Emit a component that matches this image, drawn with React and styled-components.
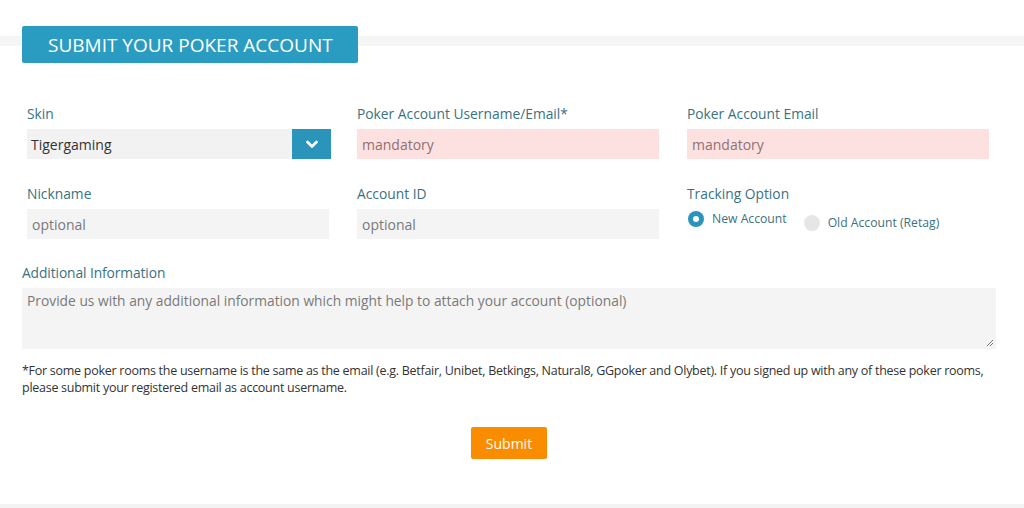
import React from "react";
import styled, { createGlobalStyle } from "styled-components";

const Global = createGlobalStyle`
  html, body { margin: 0; padding: 0; background: #fff; }
  body { font-family: "Open Sans", "Liberation Sans", sans-serif; }
  * { box-sizing: border-box; }
`;

const Page = styled.div`
  width: 1024px;
  height: 508px;
  padding: 26px 28px 0 22px;
  background:
    linear-gradient(to bottom, transparent 36px, #f5f5f5 36px, #f5f5f5 46px, transparent 46px),
    linear-gradient(to top, #f3f3f3 4px, transparent 4px);
  display: flex;
  flex-direction: column;
`;

const TitleTab = styled.div`
  align-self: flex-start;
  width: 336px;
  height: 37px;
  background: #2b9cc1;
  color: #fff;
  font-size: 19px;
  line-height: 38px;
  padding-left: 26px;
  border-radius: 2px;
`;

const Grid = styled.div`
  margin-top: 41px;
  padding-left: 5px;
  display: grid;
  grid-template-columns: repeat(3, 302px);
  column-gap: 28px;
  row-gap: 25px;
`;

const Field = styled.div`
  display: flex;
  flex-direction: column;
`;

const Label = styled.div`
  color: #3a7281;
  font-size: 13.8px;
  line-height: 20px;
  height: 20px;
  margin-bottom: 5px;
  letter-spacing: ${(p) => (p.$tight ? "-0.1px" : "0")};
`;

const Input = styled.div`
  height: 30px;
  background: ${(p) => (p.$mandatory ? "#fde1e1" : "#f4f4f4")};
  color: ${(p) => (p.$mandatory ? "#8d7272" : "#7a7a7a")};
  font-size: 14px;
  line-height: 31px;
  padding-left: 5px;
`;

const SelectBox = styled.div`
  height: 30px;
  width: 304px;
  background: #f2f2f2;
  display: flex;
  align-items: stretch;
`;

const SelectValue = styled.div`
  flex: 1;
  color: #333;
  font-size: 14px;
  line-height: 31px;
  padding-left: 4px;
`;

const SelectButton = styled.div`
  width: 39px;
  background: #2b94bb;
  display: flex;
  align-items: center;
  justify-content: center;
`;

const RadioRow = styled.div`
  display: flex;
  align-items: flex-start;
  gap: 16px;
  padding-top: 1px;
`;

const RadioOption = styled.div`
  display: flex;
  align-items: center;
  gap: 8px;
  margin-top: ${(p) => p.$offset || 0}px;
  margin-left: 1px;
  font-size: 12.2px;
  color: #3a7281;
`;

const RadioDot = styled.span`
  width: 16px;
  height: 16px;
  border-radius: 50%;
  background: ${(p) => (p.$checked ? "#2b94bb" : "#e6e6e6")};
  display: flex;
  align-items: center;
  justify-content: center;
  &::after {
    content: "";
    display: ${(p) => (p.$checked ? "block" : "none")};
    width: 6px;
    height: 6px;
    border-radius: 50%;
    background: #fff;
  }
`;

const Section = styled.div`
  margin-top: 24px;
  display: flex;
  flex-direction: column;
`;

const TextArea = styled.div`
  position: relative;
  height: 61px;
  background: #f4f4f4;
  color: #7a7a7a;
  font-size: 13.8px;
  padding: 2px 5px;
  line-height: 21px;
`;

const Grip = styled.svg`
  position: absolute;
  right: 2px;
  bottom: 2px;
`;

const Note = styled.p`
  margin: 13px 0 0;
  color: #333;
  font-size: 12.5px;
  line-height: 17px;
  letter-spacing: -0.27px;
`;

const Actions = styled.div`
  display: flex;
  justify-content: center;
  margin-top: 31px;
`;

const SubmitButton = styled.button`
  width: 76px;
  height: 32px;
  border: none;
  border-radius: 2px;
  background: #fa8c00;
  color: #fff;
  font-family: "Open Sans", "Liberation Sans", sans-serif;
  font-size: 14px;
  padding: 0;
`;

export default function App() {
  return (
    <>
      <Global />
      <Page>
        <TitleTab>SUBMIT YOUR POKER ACCOUNT</TitleTab>
        <Grid>
          <Field>
            <Label>Skin</Label>
            <SelectBox>
              <SelectValue>Tigergaming</SelectValue>
              <SelectButton>
                <svg width="12" height="9" viewBox="0 0 12 9">
                  <path d="M1.5 2 L6 6.5 L10.5 2" fill="none" stroke="#fff" strokeWidth="2.6" strokeLinecap="round" strokeLinejoin="round" />
                </svg>
              </SelectButton>
            </SelectBox>
          </Field>
          <Field>
            <Label>Poker Account Username/Email*</Label>
            <Input $mandatory>mandatory</Input>
          </Field>
          <Field>
            <Label>Poker Account Email</Label>
            <Input $mandatory>mandatory</Input>
          </Field>
          <Field>
            <Label>Nickname</Label>
            <Input>optional</Input>
          </Field>
          <Field>
            <Label>Account ID</Label>
            <Input>optional</Input>
          </Field>
          <Field>
            <Label>Tracking Option</Label>
            <RadioRow>
              <RadioOption>
                <RadioDot $checked />
                New Account
              </RadioOption>
              <RadioOption $offset={4}>
                <RadioDot />
                Old Account (Retag)
              </RadioOption>
            </RadioRow>
          </Field>
        </Grid>
        <Section>
          <Label $tight>Additional Information</Label>
          <TextArea>
            Provide us with any additional information which might help to attach your account (optional)
            <Grip width="8" height="8" viewBox="0 0 8 8">
              <path d="M7 1 L1 7 M7 4 L4 7" stroke="#777" strokeWidth="1" />
            </Grip>
          </TextArea>
        </Section>
        <Note>
          *For some poker rooms the username is the same as the email (e.g. Betfair, Unibet, Betkings, Natural8, GGpoker and Olybet). If you signed up with any of these poker rooms, please submit your registered email as account username.
        </Note>
        <Actions>
          <SubmitButton>Submit</SubmitButton>
        </Actions>
      </Page>
    </>
  );
}
